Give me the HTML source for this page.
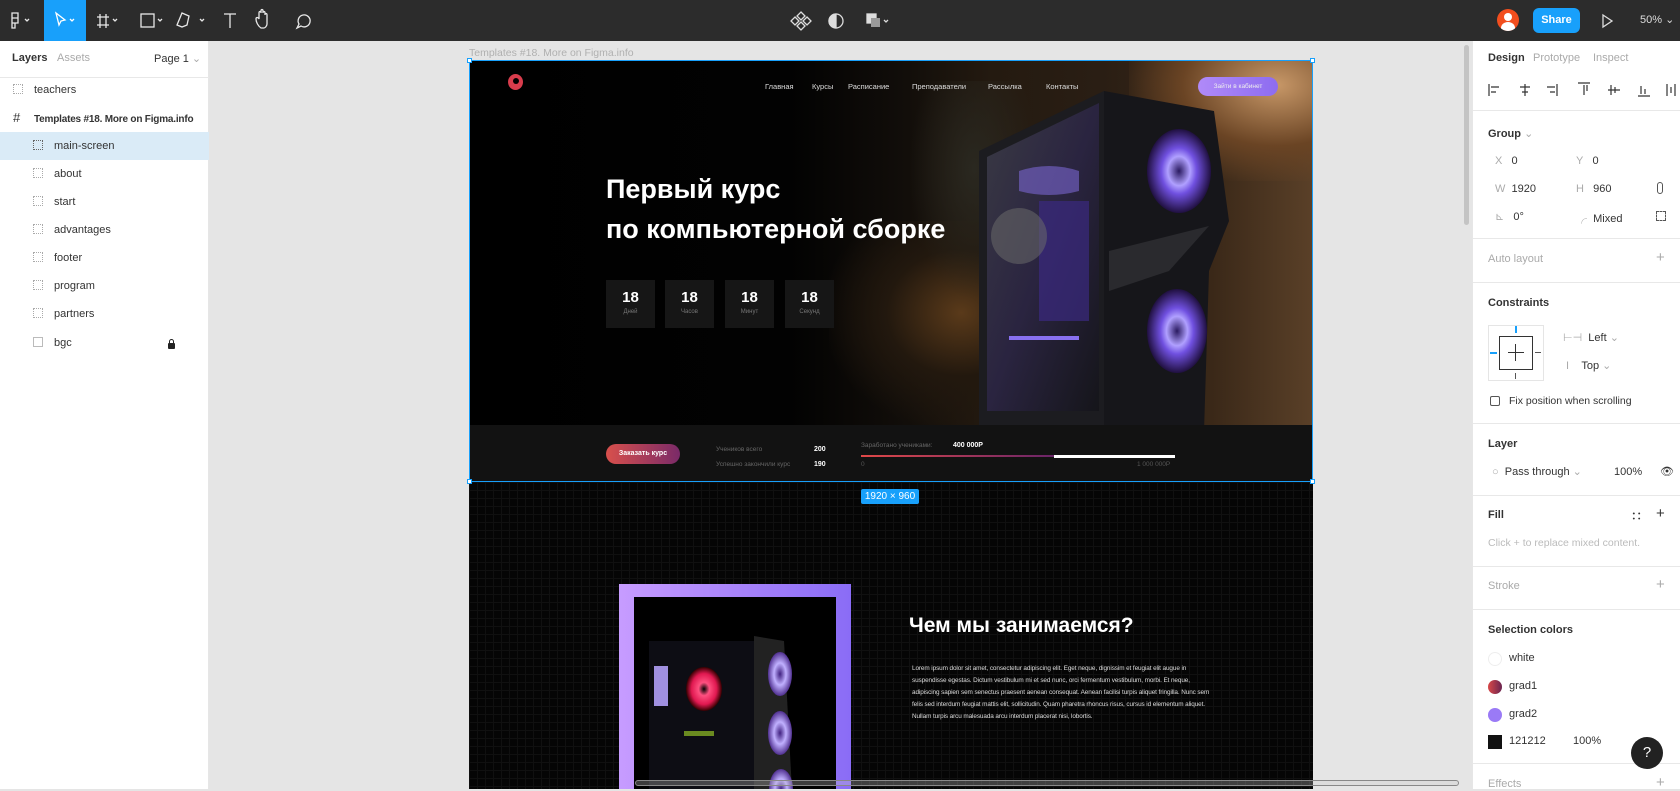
<!DOCTYPE html>
<html><head><meta charset="utf-8"><style>
*{margin:0;padding:0;box-sizing:border-box}
body{width:1680px;height:789px;overflow:hidden;background:#e5e5e5;font-family:"Liberation Sans","Noto Sans CJK SC",sans-serif;position:relative;font-size:11.5px;color:#333}
.a{position:absolute}
.tb{left:0;top:0;width:1680px;height:41px;background:#2c2c2c}
.lp{left:0;top:41px;width:209px;height:748px;background:#fff;border-right:1px solid #e6e6e6}
.rp{left:1472px;top:41px;width:208px;height:748px;background:#fff;border-left:1px solid #e6e6e6}
.row{position:absolute;left:0;width:209px;height:28px;line-height:28px;font-size:11px;color:#333;white-space:nowrap}
.ic{display:inline-block;width:10px;height:10px;border:1px dotted #aaa;vertical-align:-1px;margin-right:11px}
.hd{font-weight:bold;font-size:11px;color:#333}
.gr{color:#aaa}
.dv{position:absolute;left:0;width:208px;height:1px;background:#e8e8e8}
.nav{font-size:7.5px;color:#ddd}
.cd{width:49px;height:48px;background:#161616;text-align:center;color:#fff;font-weight:bold;font-size:15px;padding-top:9px}
.cd small{display:block;font-size:6px;color:#777;font-weight:normal;margin-top:3px}
</style></head><body>
<div class="a tb"></div>
<div class="a" style="left:44px;top:0;width:42px;height:41px;background:#18a0fb"></div>
<svg class="a" style="left:0;top:0" width="340" height="41" fill="none" stroke="#e8e8e8" stroke-width="1.3">
<path d="M12 13h6v5h-6zM12 18h6v5h-6zM12 23h3v5h-3zM18 13v5"/><path d="M25 19l2 2 2-2"/>
<path d="M56 13l9 7-4 1-2 4z" stroke="#fff"/><path d="M70 19l2 2 2-2" stroke="#fff"/>
<path d="M100 14v14M106 14v14M97 17h12M97 25h12"/><path d="M113 19l2 2 2-2"/>
<rect x="141" y="14" width="13" height="13"/><path d="M158 19l2 2 2-2"/>
<path d="M182 13l7 3-2 9-5 2-5-2z"/><path d="M200 19l2 2 2-2"/>
<path d="M224 14h12M230 14v14"/>
<path d="M261 28c-3-2-5-6-5-9 0-2 2-2 3 0v-6c0-2 2-2 2 0v-2c0-2 2-2 2 0v2c0-2 2-2 2 0v2c0-2 2-2 2 0v9c0 2-2 4-3 4z"/>
<path d="M297 28l2-4a6 6 0 1 1 2 2z"/>
</svg>
<svg class="a" style="left:790px;top:8px" width="110" height="26" fill="none" stroke="#ddd" stroke-width="1.3">
<path d="M11 4l4 4-4 4-4-4zM11 14l4 4-4 4-4-4zM5 9l4 4-4 4-4-4zM17 9l4 4-4 4-4-4z"/>
<circle cx="46" cy="13" r="7"/><path d="M46 6a7 7 0 0 0 0 14z" fill="#ddd"/>
<rect x="77" y="6" width="9" height="9" fill="#ddd"/><rect x="81" y="10" width="9" height="9" fill="#999" stroke="none"/>
<path d="M94 12l2 2 2-2"/>
</svg>
<div class="a" style="left:1497px;top:9px;width:22px;height:22px;border-radius:50%;background:#f24e1e;overflow:hidden"><div class="a" style="left:7px;top:4px;width:8px;height:8px;border-radius:50%;background:#fff"></div><div class="a" style="left:4px;top:13px;width:14px;height:12px;border-radius:50%;background:#fff"></div></div>
<div class="a" style="left:1533px;top:8px;width:47px;height:25px;background:#18a0fb;border-radius:6px;color:#fff;font-weight:bold;font-size:11px;text-align:center;line-height:25px">Share</div>
<svg class="a" style="left:1600px;top:13px" width="14" height="16" fill="none" stroke="#ddd" stroke-width="1.3"><path d="M3 2l9 6-9 6z"/></svg>
<div class="a" style="left:1640px;top:13px;color:#ddd;font-size:11px">50% ⌄</div>

<div class="a lp">
<div class="a hd" style="left:12px;top:11px">Layers</div><div class="a gr" style="left:57px;top:11px;font-size:11px">Assets</div>
<div class="a" style="left:154px;top:11px;font-size:11px;color:#333">Page 1 <span class="gr">⌄</span></div>
<div class="a" style="left:0;top:36px;width:209px;height:1px;background:#e8e8e8"></div>
<div class="row" style="top:35px;padding-left:13px"><span class="ic"></span>teachers</div>
<div class="row" style="top:63px;padding-left:13px;font-weight:bold;font-size:10px;letter-spacing:-0.2px"><span style="display:inline-block;width:10px;margin-right:11px;font-weight:normal;font-size:13px">#</span>Templates #18. More on Figma.info</div>
<div class="row" style="top:91px;padding-left:33px;background:#daebf7"><span class="ic" style="border-color:#666"></span>main-screen</div>
<div class="row" style="top:119px;padding-left:33px"><span class="ic"></span>about</div>
<div class="row" style="top:147px;padding-left:33px"><span class="ic"></span>start</div>
<div class="row" style="top:175px;padding-left:33px"><span class="ic"></span>advantages</div>
<div class="row" style="top:203px;padding-left:33px"><span class="ic"></span>footer</div>
<div class="row" style="top:231px;padding-left:33px"><span class="ic"></span>program</div>
<div class="row" style="top:259px;padding-left:33px"><span class="ic"></span>partners</div>
<div class="row" style="top:288px;padding-left:33px"><span class="ic" style="border-style:solid;border-color:#bbb"></span>bgc<span style="position:absolute;left:168px;top:14px;width:7px;height:6px;background:#222;border-radius:1px"></span><span style="position:absolute;left:169px;top:10px;width:5px;height:6px;border:1.3px solid #222;border-radius:3px 3px 0 0"></span></div>
</div>

<div class="a" style="left:469px;top:47px;font-size:10.5px;color:#b0b0b0">Templates #18. More on Figma.info</div>
<div class="a" style="left:1464px;top:45px;width:5px;height:180px;background:#c4c4c4;border-radius:3px"></div>
<div class="a" style="left:469px;top:61px;width:844px;height:728px;background:#000;overflow:hidden">
 <div class="a" style="left:0;top:0;width:844px;height:364px;background:linear-gradient(90deg,#000 0%,#020202 38%,#120e0a 52%,#241a10 62%,#2a1e14 75%,#3a2818 88%,#5a4028 100%)"></div>
 <div class="a" style="left:660px;top:0;width:184px;height:120px;background:radial-gradient(ellipse at 80% 20%,#c89868 0%,#6a4424 45%,transparent 75%)"></div>
 <div class="a" style="left:360px;top:160px;width:240px;height:204px;background:radial-gradient(ellipse at 55% 45%,#5a3a1a 0%,#22180e 40%,transparent 75%)"></div>
 <div class="a" style="left:440px;top:20px;width:130px;height:220px;background:radial-gradient(ellipse at 50% 40%,#2a2820 0%,transparent 70%)"></div>
 <svg class="a" style="left:510px;top:30px" width="270" height="334">
  <defs><radialGradient id="f"><stop offset="0" stop-color="#2a1a60"/><stop offset=".35" stop-color="#b0a0ff"/><stop offset=".55" stop-color="#7050e0"/><stop offset="1" stop-color="#201040"/></radialGradient>
  <linearGradient id="g" x1="0" y1="0" x2="1" y2="1"><stop offset="0" stop-color="#3a3a44"/><stop offset=".5" stop-color="#2a2440"/><stop offset="1" stop-color="#15151a"/></linearGradient></defs>
  <path d="M0 60L125 0 175 20 175 334 0 334z" fill="#1c1c20"/>
  <path d="M8 66L120 12 120 320 8 320z" fill="url(#g)"/>
  <path d="M40 80q30-10 60 0v20q-30 8-60 0z" fill="#7a66d0" opacity=".6"/>
  <path d="M60 110h50v120H60z" fill="#3a2a80" opacity=".7"/>
  <circle cx="40" cy="145" r="28" fill="#6a6a6a" opacity=".55"/>
  <rect x="30" y="245" width="70" height="4" fill="#8870f0"/>
  <path d="M125 0l110 20 15 110-20 50-5 160H125z" fill="#16161a"/>
  <path d="M130 160l100-25-40 45-60 20z" fill="#2a2a2e"/>
  <ellipse cx="200" cy="80" rx="32" ry="42" fill="url(#f)"/>
  <ellipse cx="198" cy="240" rx="30" ry="42" fill="url(#f)"/>
 </svg>
 <div class="a" style="left:39px;top:13px;width:15px;height:16px;border-radius:50%;background:#d83c4c"></div>
 <div class="a" style="left:44px;top:17px;width:6px;height:6px;border-radius:50%;background:#000"></div>
 <div class="a nav" style="left:296px;top:21px">Главная</div>
 <div class="a nav" style="left:343px;top:21px">Курсы</div>
 <div class="a nav" style="left:379px;top:21px">Расписание</div>
 <div class="a nav" style="left:443px;top:21px">Преподаватели</div>
 <div class="a nav" style="left:519px;top:21px">Рассылка</div>
 <div class="a nav" style="left:577px;top:21px">Контакты</div>
 <div class="a" style="left:729px;top:16px;width:80px;height:19px;border-radius:10px;background:linear-gradient(90deg,#b08af8,#8d6cf0);color:#eee;font-size:6.5px;text-align:center;line-height:19px">Зайти в кабинет</div>
 <div class="a" style="left:137px;top:108px;color:#fff;font-weight:bold;font-size:27px;line-height:40px">Первый курс<br>по компьютерной сборке</div>
 <div class="a cd" style="left:137px;top:219px">18<small>Дней</small></div>
 <div class="a cd" style="left:196px;top:219px">18<small>Часов</small></div>
 <div class="a cd" style="left:256px;top:219px">18<small>Минут</small></div>
 <div class="a cd" style="left:316px;top:219px">18<small>Секунд</small></div>
 <div class="a" style="left:0;top:364px;width:844px;height:57px;background:#121212"></div>
 <div class="a" style="left:137px;top:383px;width:74px;height:20px;border-radius:10px;background:linear-gradient(90deg,#d8504c,#7a2a68);color:#fff;font-size:7px;font-weight:bold;text-align:center;line-height:20px">Заказать курс</div>
 <div class="a" style="left:247px;top:381px;font-size:6.5px;color:#666;line-height:15px">Учеников всего<br>Успешно закончили курс</div>
 <div class="a" style="left:345px;top:381px;font-size:7px;color:#fff;font-weight:bold;line-height:15px">200<br>190</div>
 <div class="a" style="left:392px;top:381px;font-size:6.5px;color:#666">Заработано учениками:</div>
 <div class="a" style="left:484px;top:381px;font-size:7px;color:#fff;font-weight:bold">400 000Р</div>
 <div class="a" style="left:392px;top:394px;width:193px;height:2px;background:linear-gradient(90deg,#e04848,#6a2468)"></div>
 <div class="a" style="left:585px;top:394px;width:121px;height:3px;background:#fff"></div>
 <div class="a" style="left:392px;top:400px;font-size:6.5px;color:#555">0</div>
 <div class="a" style="left:668px;top:400px;font-size:6.5px;color:#555">1 000 000Р</div>
 <div class="a" style="left:0;top:421px;width:844px;height:307px;background-color:#050505;background-image:linear-gradient(#101010 1px,transparent 1px),linear-gradient(90deg,#101010 1px,transparent 1px);background-size:8px 8px"></div>
 <div class="a" style="left:150px;top:523px;width:232px;height:210px;background:linear-gradient(90deg,#c79cff,#8a6cf6)"></div>
 <div class="a" style="left:165px;top:536px;width:202px;height:200px;background:#000"></div>
 <svg class="a" style="left:175px;top:560px" width="170" height="170">
  <defs><radialGradient id="p"><stop offset="0" stop-color="#000"/><stop offset=".3" stop-color="#ff5080"/><stop offset=".7" stop-color="#e01850"/><stop offset="1" stop-color="#300"/></radialGradient>
  <radialGradient id="v"><stop offset="0" stop-color="#402080"/><stop offset=".5" stop-color="#c0b0ff"/><stop offset="1" stop-color="#503090"/></radialGradient></defs>
  <path d="M5 20L120 20 120 170 5 170z" fill="#0d0d14"/>
  <path d="M110 15l30 5 8 150h-38z" fill="#222"/>
  <rect x="10" y="45" width="14" height="40" fill="#a090e0"/>
  <ellipse cx="60" cy="68" rx="18" ry="22" fill="url(#p)"/>
  <ellipse cx="136" cy="53" rx="12" ry="22" fill="url(#v)"/>
  <ellipse cx="136" cy="112" rx="12" ry="22" fill="url(#v)"/>
  <ellipse cx="137" cy="168" rx="12" ry="20" fill="url(#v)"/>
  <rect x="40" y="110" width="30" height="5" fill="#6a8a20"/>
 </svg>
 <div class="a" style="left:440px;top:553px;color:#fff;font-weight:bold;font-size:21px">Чем мы занимаемся?</div>
 <div class="a" style="left:443px;top:602px;width:300px;color:#ddd;font-size:6.4px;line-height:12.1px;letter-spacing:-0.1px">Lorem ipsum dolor sit amet, consectetur adipiscing elit. Eget neque, dignissim et feugiat elit augue in suspendisse egestas. Dictum vestibulum mi et sed nunc, orci fermentum vestibulum, morbi. Et neque, adipiscing sapien sem senectus praesent aenean consequat. Aenean facilisi turpis aliquet fringilla. Nunc sem felis sed interdum feugiat mattis elit, sollicitudin. Quam pharetra rhoncus risus, cursus id elementum aliquet. Nullam turpis arcu malesuada arcu interdum placerat nisi, lobortis.</div>
</div>
<div class="a" style="left:469px;top:60px;width:844px;height:422px;border:1px solid #18a0fb"></div>
<div class="a" style="left:467px;top:58px;width:5px;height:5px;background:#fff;border:1px solid #18a0fb"></div>
<div class="a" style="left:1310px;top:58px;width:5px;height:5px;background:#fff;border:1px solid #18a0fb"></div>
<div class="a" style="left:467px;top:479px;width:5px;height:5px;background:#fff;border:1px solid #18a0fb"></div>
<div class="a" style="left:1310px;top:479px;width:5px;height:5px;background:#fff;border:1px solid #18a0fb"></div>
<div class="a" style="left:861px;top:489px;width:58px;height:15px;background:#18a0fb;color:#fff;font-size:10px;text-align:center;line-height:15px;border-radius:2px">1920 × 960</div>
<div class="a" style="left:635px;top:780px;width:824px;height:6px;border:1px solid #888;border-radius:3px;background:rgba(200,200,200,.3)"></div>

<div class="a rp">
<div class="a hd" style="left:15px;top:11px">Design</div>
<div class="a gr" style="left:60px;top:11px;font-size:11px">Prototype</div>
<div class="a gr" style="left:120px;top:11px;font-size:11px">Inspect</div>
<svg class="a" style="left:14px;top:40px" width="190" height="18" fill="none" stroke="#333" stroke-width="1.2">
<path d="M2 3v12M4 6h8M4 11h5"/><path d="M38 3v12M33 6h10M35 11h6"/><path d="M70 3v12M60 6h8M63 11h5"/>
<path d="M91 2h12M97 4v10M100 4v6"/><path d="M121 9h12M124 4v10M128 6v6"/><path d="M151 15h12M154 5v8M158 8v5"/>
<path d="M180 3v12M188 3v12M184 6v6"/>
</svg>
<div class="dv" style="top:69px"></div>
<div class="a hd" style="left:15px;top:86px">Group <span class="gr" style="font-weight:normal">⌄</span></div>
<div class="a" style="left:22px;top:114px;font-size:11px"><span class="gr">X</span>&nbsp;&nbsp;&nbsp;0</div>
<div class="a" style="left:103px;top:114px;font-size:11px"><span class="gr">Y</span>&nbsp;&nbsp;&nbsp;0</div>
<div class="a" style="left:22px;top:142px;font-size:11px"><span class="gr">W</span>&nbsp;&nbsp;1920</div>
<div class="a" style="left:103px;top:142px;font-size:11px"><span class="gr">H</span>&nbsp;&nbsp;&nbsp;960</div>
<div class="a" style="left:22px;top:169px;font-size:11px"><span class="gr">⊾</span>&nbsp;&nbsp;&nbsp;0°</div>
<div class="a" style="left:103px;top:169px;font-size:11px"><span class="gr">╭</span>&nbsp;&nbsp;Mixed</div>
<div class="a" style="left:184px;top:141px;width:6px;height:12px;border:1px solid #555;border-radius:3px"></div>
<div class="a" style="left:183px;top:170px;width:10px;height:10px;border:1px dashed #555"></div>
<div class="dv" style="top:197px"></div>
<div class="a gr" style="left:15px;top:212px;font-size:11px">Auto layout</div><div class="a gr" style="left:183px;top:208px;font-size:15px">+</div>
<div class="dv" style="top:241px"></div>
<div class="a hd" style="left:15px;top:256px">Constraints</div>
<div class="a" style="left:15px;top:284px;width:56px;height:56px;border:1px solid #e5e5e5"></div>
<div class="a" style="left:26px;top:295px;width:34px;height:34px;border:1px solid #333"></div>
<div class="a" style="left:42px;top:303px;width:1px;height:17px;background:#333"></div>
<div class="a" style="left:35px;top:311px;width:16px;height:1px;background:#333"></div>
<div class="a" style="left:42px;top:285px;width:2px;height:7px;background:#18a0fb"></div>
<div class="a" style="left:17px;top:311px;width:7px;height:2px;background:#18a0fb"></div>
<div class="a" style="left:62px;top:311px;width:6px;height:1px;background:#555"></div>
<div class="a" style="left:42px;top:332px;width:1px;height:6px;background:#555"></div>
<div class="a" style="left:90px;top:290px;font-size:11px"><span class="gr">⊢⊣</span>&nbsp;&nbsp;Left <span class="gr">⌄</span></div>
<div class="a" style="left:90px;top:318px;font-size:11px"><span class="gr">&nbsp;I&nbsp;&nbsp;</span>&nbsp;&nbsp;Top <span class="gr">⌄</span></div>
<div class="a" style="left:17px;top:355px;width:10px;height:10px;border:1px solid #555;border-radius:2px"></div>
<div class="a" style="left:36px;top:354px;font-size:10.5px">Fix position when scrolling</div>
<div class="dv" style="top:382px"></div>
<div class="a hd" style="left:15px;top:397px">Layer</div>
<div class="a" style="left:19px;top:424px;font-size:11px"><span class="gr">○</span>&nbsp;&nbsp;Pass through <span class="gr">⌄</span></div>
<div class="a" style="left:141px;top:425px;font-size:11px">100%</div>
<div class="a" style="left:187px;top:424px;font-size:11px">👁</div>
<div class="dv" style="top:454px"></div>
<div class="a hd" style="left:15px;top:468px">Fill</div>
<div class="a" style="left:158px;top:467px;font-size:11px;font-weight:bold">∷</div><div class="a" style="left:183px;top:464px;font-size:15px">+</div>
<div class="a" style="left:15px;top:496px;font-size:10.5px;color:#bbb">Click + to replace mixed content.</div>
<div class="dv" style="top:525px"></div>
<div class="a gr" style="left:15px;top:539px;font-size:11px">Stroke</div><div class="a gr" style="left:183px;top:535px;font-size:15px">+</div>
<div class="dv" style="top:568px"></div>
<div class="a hd" style="left:15px;top:583px">Selection colors</div>
<div class="a" style="left:15px;top:611px;width:14px;height:14px;border-radius:50%;border:1px solid #eee"></div><div class="a" style="left:36px;top:611px;font-size:11px">white</div>
<div class="a" style="left:15px;top:639px;width:14px;height:14px;border-radius:50%;background:linear-gradient(90deg,#d84848,#6a2450)"></div><div class="a" style="left:36px;top:639px;font-size:11px">grad1</div>
<div class="a" style="left:15px;top:667px;width:14px;height:14px;border-radius:50%;background:#9a7af6"></div><div class="a" style="left:36px;top:667px;font-size:11px">grad2</div>
<div class="a" style="left:15px;top:694px;width:14px;height:14px;background:#121212"></div><div class="a" style="left:36px;top:694px;font-size:11px">121212</div><div class="a" style="left:100px;top:694px;font-size:11px">100%</div>
<div class="dv" style="top:722px"></div>
<div class="a gr" style="left:15px;top:737px;font-size:11px">Effects</div><div class="a gr" style="left:183px;top:733px;font-size:15px">+</div>
</div>
<div class="a" style="left:1631px;top:737px;width:32px;height:32px;border-radius:50%;background:#222;color:#fff;text-align:center;line-height:32px;font-size:15px">?</div>
</body></html>
